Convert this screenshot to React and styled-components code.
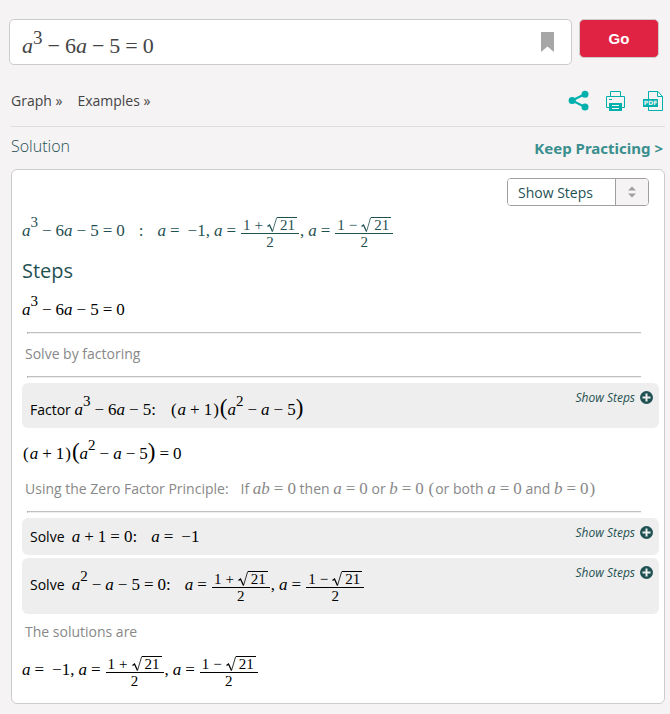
import React, { useState } from "react";
import styled, { createGlobalStyle } from "styled-components";

// square brackets stand for the tall round ones
const TOKENS = /\^\d|\d+|[a-z]|[-+=(),:[\]]/g;

const Formula = ({ children, size = "normal" }) => {
  const parts = React.Children.toArray(children);

  return (
    <FormulaText $size={size}>
      {parts.map((part, i) =>
        typeof part === "string" ? <Tokens key={i} text={part} /> : part
      )}
    </FormulaText>
  );
};

const Tokens = ({ text }) => {
  const tokens = text.match(TOKENS) || [];

  return tokens.map((token, i) => {
    if (token[0] === "^") return <Power key={i}>{token[1]}</Power>;
    if (/[a-z]/.test(token)) return <Variable key={i}>{token}</Variable>;
    if (token === "-" && tokens[i - 1] === "=") {
      return <Negative key={i}>−</Negative>;
    }
    if (token === "-") return <Operator key={i}>−</Operator>;
    if (token === "+" || token === "=") {
      return <Operator key={i}>{token}</Operator>;
    }
    if (token === ",") return <Comma key={i}>,</Comma>;
    if (token === "(" || token === ")") return <Paren key={i}>{token}</Paren>;
    if (token === "[") return <TallParen key={i}>(</TallParen>;
    if (token === "]") return <TallParen key={i}>)</TallParen>;
    return <span key={i}>{token}</span>;
  });
};

const Root = ({ sign }) => (
  <Fraction>
    <Numerator>
      <span>1</span>
      <span>{sign}</span>
      <Radical>
        <RadicalSign viewBox="0 0 10 16">
          <path d="M0.5 9.5 L2.5 8 L5.5 14.5" strokeWidth="1.3" />
          <path d="M5.5 14.5 L9.7 0.5" strokeWidth="0.8" />
        </RadicalSign>
        <Radicand>21</Radicand>
      </Radical>
    </Numerator>
    <Denominator>2</Denominator>
  </Fraction>
);

const Roots = () => (
  <Formula>
    a=-1,a=
    <Root sign="+" />
    ,a=
    <Root sign="−" />
  </Formula>
);

const ShareIcon = () => (
  <svg width="21" height="21" viewBox="0 0 21 21" fill="#00b0ad">
    <path d="M17 4 L4 10.5 L17 17" fill="none" stroke="#00b0ad" strokeWidth="2" />
    <circle cx="4.2" cy="10.5" r="3.6" />
    <circle cx="17" cy="4.2" r="3.5" />
    <circle cx="17" cy="17" r="3.5" />
  </svg>
);

const PrintIcon = () => (
  <svg width="20" height="21" viewBox="0 0 20 21" fill="none" stroke="#00b0ad">
    <path d="M4.5 6.5 V1.5 H14.5 V6.5" />
    <path d="M3.5 17.5 H0.5 V6.5 H18.5 V17.5 H15.5" />
    <path d="M3 9.5 H6" />
    <path d="M3 13 H16 V21 H3 Z" fill="#00b0ad" stroke="none" />
    <path d="M6 15.5 H13 M6 18.5 H13" stroke="#f5f3f4" />
  </svg>
);

const PdfIcon = () => (
  <svg width="21" height="21" viewBox="0 0 21 21">
    <path
      d="M5.5 9 V1.5 H15 L19.5 6.5 V20.5 H5.5 V17 M14.5 1.5 V6.5 H19.5"
      fill="none"
      stroke="#00b0ad"
    />
    <rect x="0" y="9" width="15" height="8" fill="#00b0ad" />
    <text
      x="7.5"
      y="15.2"
      textAnchor="middle"
      fontFamily="DejaVu Sans, sans-serif"
      fontSize="6"
      fontWeight="bold"
      fill="#f5f3f4"
    >
      PDF
    </text>
  </svg>
);

const PlusIcon = () => (
  <svg width="13" height="13" viewBox="0 0 13 13">
    <circle cx="6.5" cy="6.5" r="6.5" fill="#1f5152" />
    <path d="M6.5 2.5 V10.5 M2.5 6.5 H10.5" stroke="#eee" strokeWidth="2" />
  </svg>
);

const Step = ({ children }) => (
  <StepBox>
    <StepBody>{children}</StepBody>
    <ShowSteps type="button">
      Show Steps
      <PlusIcon />
    </ShowSteps>
  </StepBox>
);

const App = () => {
  const [view, setView] = useState("show");

  return (
    <>
      <GlobalStyle />
      <Page>
        <SearchRow>
          <SearchBox>
            <MathInput
              role="textbox"
              aria-label="Equation"
              contentEditable
              suppressContentEditableWarning
            >
              <Formula size="large">a^3-6a-5=0</Formula>
            </MathInput>
            <IconButton type="button" aria-label="Bookmark">
              <svg width="13" height="20" viewBox="0 0 13 20">
                <path d="M0 0 H13 V20 L6.5 14.5 L0 20 Z" fill="#a6a6a6" />
              </svg>
            </IconButton>
          </SearchBox>
          <GoButton type="button">Go</GoButton>
        </SearchRow>

        <Toolbar>
          <Links>
            <ToolLink href="#graph">Graph »</ToolLink>
            <ToolLink href="#examples">Examples »</ToolLink>
          </Links>
          <Actions>
            <IconButton type="button" aria-label="Share">
              <ShareIcon />
            </IconButton>
            <IconButton type="button" aria-label="Print">
              <PrintIcon />
            </IconButton>
            <IconButton type="button" aria-label="Download">
              <PdfIcon />
            </IconButton>
          </Actions>
        </Toolbar>

        <SolutionHeader>
          <SolutionTitle>Solution</SolutionTitle>
          <PracticeLink href="#practice">Keep Practicing &gt;</PracticeLink>
        </SolutionHeader>

        <Panel>
          <SelectBox>
            <Select
              aria-label="Steps view"
              value={view}
              onChange={(e) => setView(e.target.value)}
            >
              <option value="show">Show Steps</option>
              <option value="hide">Hide Steps</option>
            </Select>
            <SelectArrows>
              <svg width="8" height="12" viewBox="0 0 8 12" fill="#a0a0a0">
                <path d="M0 4.5 L4 0.5 L8 4.5 Z M0 7.5 L4 11.5 L8 7.5 Z" />
              </svg>
            </SelectArrows>
          </SelectBox>

          <Result>
            <Formula>a^3-6a-5=0</Formula>
            <Formula>:</Formula>
            <Roots />
          </Result>

          <StepsTitle>Steps</StepsTitle>
          <Line>
            <Formula>a^3-6a-5=0</Formula>
          </Line>
          <Rule />
          <Caption>Solve by factoring</Caption>
          <Rule />
          <Step>
            <Label>
              Factor <Formula>a^3-6a-5:</Formula>
            </Label>
            <Formula>(a+1)[a^2-a-5]</Formula>
          </Step>
          <Line>
            <Formula>(a+1)[a^2-a-5]=0</Formula>
          </Line>
          <Caption>
            <span>Using the Zero Factor Principle:</span>
            <span>
              If <Formula>ab=0</Formula> then <Formula>a=0</Formula> or{" "}
              <Formula>b=0</Formula> <Formula>(</Formula>or both{" "}
              <Formula>a=0</Formula> and <Formula>b=0)</Formula>
            </span>
          </Caption>
          <Rule />
          <Step>
            <Label>
              Solve&nbsp; <Formula>a+1=0:</Formula>
            </Label>
            <Formula>a=-1</Formula>
          </Step>
          <Step>
            <Label>
              Solve&nbsp; <Formula>a^2-a-5=0:</Formula>
            </Label>
            <Formula>
              a=
              <Root sign="+" />
              ,a=
              <Root sign="−" />
            </Formula>
          </Step>
          <Caption>The solutions are</Caption>
          <Answer>
            <Roots />
          </Answer>
        </Panel>
      </Page>
    </>
  );
};

const GlobalStyle = createGlobalStyle`
  * {
    box-sizing: border-box;
  }

  body {
    margin: 0;
    background: #f5f3f4;
    font-family: "Open Sans", "Noto Sans", sans-serif;
    font-size: 14px;
    color: #000;
  }
`;

const Page = styled.main`
  padding: 19px 5px 10px 9px;
`;

const SearchRow = styled.div`
  display: flex;
  align-items: flex-start;
  gap: 7px;
  padding-right: 6px;
`;

const SearchBox = styled.div`
  display: flex;
  align-items: center;
  flex: 1;
  height: 46px;
  padding: 0 17px 0 12px;
  background: #fff;
  border: 1px solid #ccc;
  border-radius: 5px;
`;

const MathInput = styled.div`
  flex: 1;
  color: #444;
  outline: none;
`;

const IconButton = styled.button`
  display: flex;
  padding: 0;
  background: none;
  border: 0;
  cursor: pointer;
`;

const GoButton = styled.button`
  width: 80px;
  height: 39px;
  padding: 0;
  background: #e12343;
  border: 1px solid #ccc;
  border-radius: 5px;
  color: #fff;
  font-family: "Liberation Sans", Arial, sans-serif;
  font-size: 15px;
  font-weight: bold;
  cursor: pointer;
`;

const Toolbar = styled.div`
  display: flex;
  align-items: center;
  justify-content: space-between;
  height: 62px;
  margin-left: 2px;
  padding: 10px 1px 0 0;
  border-bottom: 1px solid #ddd;
`;

const Links = styled.nav`
  display: flex;
  gap: 15px;
`;

const ToolLink = styled.a`
  color: #444;
  text-decoration: none;
`;

const Actions = styled.div`
  display: flex;
  gap: 17px;
`;

const SolutionHeader = styled.div`
  display: flex;
  align-items: center;
  justify-content: space-between;
  height: 42px;
  margin-left: 2px;
  padding-right: 2px;
`;

const SolutionTitle = styled.h1`
  margin: 0;
  padding-bottom: 4px;
  color: #1f5152;
  font-size: 16px;
  font-weight: 300;
`;

const PracticeLink = styled.a`
  color: #3a8f8f;
  font-family: "Noto Sans", sans-serif;
  font-size: 15px;
  font-weight: bold;
  text-decoration: none;
`;

const Panel = styled.section`
  display: flex;
  flex-direction: column;
  margin-left: 2px;
  padding: 8px 5px 12px 10px;
  background: #fff;
  border: 1px solid #ccc;
  border-radius: 6px;
`;

const SelectBox = styled.div`
  display: grid;
  grid-template-columns: 107px 33px;
  align-self: flex-end;
  height: 28px;
  margin-right: 10px;
  border: 1px solid #a0a0a0;
  border-radius: 4px;
  overflow: hidden;
`;

const Select = styled.select`
  grid-area: 1 / 1 / 2 / 3;
  appearance: none;
  padding: 0 10px;
  background: #fff;
  border: 0;
  color: #1f5152;
  font: inherit;
`;

const SelectArrows = styled.span`
  display: flex;
  align-items: center;
  justify-content: center;
  grid-area: 1 / 2;
  background: #f5f3f4;
  border-left: 1px solid #a0a0a0;
  pointer-events: none;
`;

const FormulaText = styled.span`
  display: inline-block;
  font-family: "Liberation Serif", "Times New Roman", serif;
  font-size: ${(props) => (props.$size === "large" ? "22px" : "17px")};
  line-height: 21px;
  white-space: nowrap;
`;

const Variable = styled.i``;

const Power = styled.sup`
  display: inline-block;
  font-size: 15px;
  vertical-align: 9px;

  ${MathInput} & {
    font-size: 19px;
  }
`;

const Operator = styled.span`
  margin: 0 4px;

  ${MathInput} & {
    margin: 0 5px;
  }
`;

const Negative = styled.span`
  margin-left: 4px;
`;

const Comma = styled.span`
  margin-right: 4px;
`;

const Paren = styled.span`
  margin: 0 1px;
  font-size: 17px;
  line-height: 0;
`;

const TallParen = styled(Paren)`
  margin: 0;
  font-size: 23px;
`;

const Fraction = styled.span`
  display: inline-flex;
  flex-direction: column;
  align-items: center;
  margin: 4px 1px 2px;
  font-size: 15px;
  line-height: 16px;
  vertical-align: middle;
`;

const Numerator = styled.span`
  display: flex;
  gap: 4px;
  padding: 0 2px;
  border-bottom: 1px solid currentColor;
`;

const Denominator = styled.span``;

const Radical = styled.span`
  display: flex;
`;

const RadicalSign = styled.svg`
  width: 10px;
  height: 16px;
  fill: none;
  stroke: currentColor;
`;

const Radicand = styled.span`
  padding: 0 2px 0 3px;
  border-top: 1px solid currentColor;
  line-height: 15px;
`;

const Line = styled.div`
  display: flex;
  align-items: center;
  min-height: 43px;
  padding-bottom: 6px;
`;

const Result = styled(Line)`
  gap: 14px;
  align-items: baseline;
  min-height: 52px;
  padding: 6px 0 0;
  color: #1f5152;
`;

const Answer = styled(Line)`
  min-height: 38px;
  padding: 0;
`;

const StepsTitle = styled.h2`
  margin: 0 0 3px;
  color: #1f5152;
  font-size: 20px;
  font-weight: normal;
  line-height: 26px;
`;

const Rule = styled.hr`
  width: calc(100% - 23px);
  margin: 2px 0 5px 5px;
  border-style: solid;
  border-width: 1px 0 1px 1px;
  border-color: #c0c0c0 #c0c0c0 #eee #999;
`;

const Caption = styled.div`
  display: flex;
  align-items: baseline;
  gap: 12px;
  min-height: 35px;
  padding: 4px 3px 0;
  color: #888;
  line-height: 21px;
`;

const StepBox = styled.div`
  display: flex;
  align-items: flex-start;
  justify-content: space-between;
  margin-bottom: 3px;
  padding: 8px 6px 8px 8px;
  background: #eee;
  border-radius: 6px;
`;

const StepBody = styled.div`
  display: flex;
  align-items: baseline;
  gap: 14px;
`;

const Label = styled.span`
  white-space: nowrap;
`;

const ShowSteps = styled.button`
  display: flex;
  align-items: center;
  gap: 5px;
  padding: 0;
  background: none;
  border: 0;
  color: #1f5152;
  font: inherit;
  font-size: 12px;
  font-style: italic;
  line-height: 13px;
  cursor: pointer;
`;

export default App;
